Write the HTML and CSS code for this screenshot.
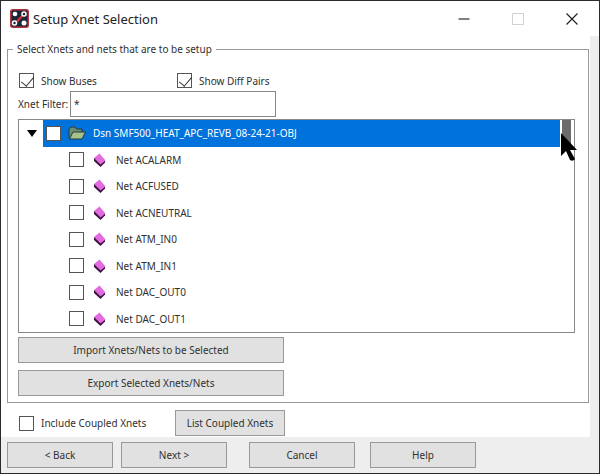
FILE: index.html
```html
<!DOCTYPE html>
<html lang="en">
<head>
<meta charset="utf-8">
<title>Setup Xnet Selection</title>
<link rel="stylesheet" href="styles.css">
</head>
<body>
<svg class="defs" aria-hidden="true">
  <symbol id="net" viewBox="0 0 14 16">
    <path d="M1 6v3l6.500 6L12 10.500V8z" fill="#3c1242"/>
    <path d="M1 6 6.500 1.500 12.500 8.500 7.500 12.500z" fill="#e26be0"/>
  </symbol>
</svg>
<div class="window">
  <header class="titlebar">
    <svg class="logo" viewBox="0 0 19 19" aria-hidden="true">
      <rect x=".75" y=".75" width="17.500" height="17.500" rx="2" fill="#1d2636" stroke="#b0343e" stroke-width="1.500"/>
      <path d="M4 15.500 15.500 3.500" stroke="#d8323c" stroke-width="2"/>
      <circle cx="5" cy="5" r="2.300" fill="#fff"/>
      <circle cx="14" cy="5" r="2" fill="#1d2636" stroke="#fff" stroke-width="1.500"/>
      <circle cx="4.500" cy="14" r="2" fill="#1d2636" stroke="#fff" stroke-width="1.500"/>
      <circle cx="14" cy="14" r="2.500" fill="#fff"/>
    </svg>
    <h1>Setup Xnet Selection</h1>
    <div class="controls">
      <button type="button" aria-label="Minimize"><svg viewBox="0 0 12 12"><path d="M.5 6h11" stroke="#555" stroke-width="1.500"/></svg></button>
      <button type="button" aria-label="Maximize" disabled><svg viewBox="0 0 12 12"><path d="M.5.5h11v11H.5z" fill="none" stroke="#d0d0d0"/></svg></button>
      <button type="button" aria-label="Close"><svg viewBox="0 0 12 12"><path d="m.5.5 11 11m0-11-11 11" stroke="#222" stroke-width="1.200"/></svg></button>
    </div>
  </header>
  <main class="page">
    <fieldset>
      <legend>Select Xnets and nets that are to be setup</legend>
      <div class="options">
        <label><input type="checkbox" checked>Show Buses</label>
        <label><input type="checkbox" checked>Show Diff Pairs</label>
      </div>
      <div class="filter">
        <label for="filter">Xnet Filter:</label>
        <input id="filter" type="text" value="*">
      </div>
      <div class="tree">
        <div class="row root">
          <button class="toggle" type="button" aria-label="Collapse"><svg viewBox="0 0 10 7"><path d="M0 0h10L5 7z"/></svg></button>
          <label><input type="checkbox"><svg class="folder" viewBox="0 0 18 14" aria-hidden="true"><path d="M1 12V3l2-2h4l1.500 2H14v3" fill="#6e8d70" stroke="#273a3c"/><path d="M1.500 13 5 6h12.500L14 13z" fill="#a5c28a" stroke="#273a3c"/></svg>Dsn SMF500_HEAT_APC_REVB_08-24-21-OBJ</label>
        </div>
        <label class="row"><input type="checkbox"><svg class="net"><use href="#net"/></svg>Net ACALARM</label>
        <label class="row"><input type="checkbox"><svg class="net"><use href="#net"/></svg>Net ACFUSED</label>
        <label class="row"><input type="checkbox"><svg class="net"><use href="#net"/></svg>Net ACNEUTRAL</label>
        <label class="row"><input type="checkbox"><svg class="net"><use href="#net"/></svg>Net ATM_IN0</label>
        <label class="row"><input type="checkbox"><svg class="net"><use href="#net"/></svg>Net ATM_IN1</label>
        <label class="row"><input type="checkbox"><svg class="net"><use href="#net"/></svg>Net DAC_OUT0</label>
        <label class="row"><input type="checkbox"><svg class="net"><use href="#net"/></svg>Net DAC_OUT1</label>
        <div class="thumb"></div>
        <svg class="pointer" viewBox="0 0 18 28" aria-hidden="true"><path d="M1 0v23l5-5 4 9q3 2 5-1l-5-9h7z"/></svg>
      </div>
      <div class="actions">
        <button class="btn" type="button">Import Xnets/Nets to be Selected</button>
        <button class="btn" type="button">Export Selected Xnets/Nets</button>
      </div>
    </fieldset>
    <div class="coupled">
      <label><input type="checkbox">Include Coupled Xnets</label>
      <button class="btn" type="button">List Coupled Xnets</button>
    </div>
  </main>
  <footer class="nav">
    <button class="btn" type="button">&lt; Back</button>
    <button class="btn" type="button">Next &gt;</button>
    <button class="btn apart" type="button">Cancel</button>
    <button class="btn" type="button">Help</button>
  </footer>
</div>
</body>
</html>
```
FILE: styles.css
```css
* {
  box-sizing: border-box;
}

body {
  margin: 0;
  background: #eee;
  color: #303030;
  font: 10px/14px "Noto Sans", "Open Sans", sans-serif;
}

button,
input {
  font: inherit;
  color: inherit;
}

svg {
  display: block;
  flex: none;
}

.defs {
  position: absolute;
  width: 0;
  height: 0;
}

.window {
  display: flex;
  flex-direction: column;
  min-height: 100vh;
  border: 1px solid #2c2a2e;
}

.titlebar {
  display: flex;
  align-items: center;
  height: 35px;
  padding-left: 9px;
  background: #fff;
}

.logo {
  width: 19px;
  height: 19px;
}

h1 {
  flex: 1;
  margin: 0 0 0 4px;
  font-size: 13px;
  font-weight: 400;
  line-height: 20px;
  color: #222;
}

.controls {
  display: flex;
}

.controls button {
  display: flex;
  align-items: center;
  justify-content: center;
  width: 54px;
  height: 34px;
  padding: 0;
  border: 0;
  background: none;
}

.controls svg {
  width: 12px;
  height: 12px;
}

.page {
  margin-right: 9px;
  padding: 6px 1px 1px 6px;
  background: #fff;
}

fieldset {
  min-width: 0;
  margin: 0;
  padding: 17px 13px 6px 10px;
  border: 1px solid #999;
}

legend {
  margin-left: -5px;
  padding: 0 4px;
}

label {
  display: flex;
  align-items: center;
}

input[type="checkbox"] {
  appearance: none;
  flex: none;
  width: 15px;
  height: 15px;
  margin: 0;
  border: 1px solid #555;
  background: #fff;
}

input[type="checkbox"]:checked::before {
  content: "";
  display: block;
  width: 6px;
  height: 11px;
  margin: 0 0 0 4px;
  border: solid #333;
  border-width: 0 1px 1px 0;
  transform: rotate(40deg);
}

.options {
  display: grid;
  grid-template-columns: 158px auto;
  justify-content: start;
  padding-left: 1px;
}

.options label,
.coupled label {
  gap: 7px;
}

.filter {
  display: flex;
  align-items: center;
  margin: 3px 0 2px;
}

.filter label {
  width: 52px;
  white-space: nowrap;
}

.filter input {
  width: 206px;
  height: 26px;
  padding: 0 3px;
  border: 1px solid #888;
  border-radius: 0;
  background: #fff;
}

.tree {
  position: relative;
  display: grid;
  grid-auto-rows: 1fr;
  min-height: 214px;
  border: 1px solid #888;
}

.row {
  gap: 9px;
  padding-left: 50px;
}

.net {
  width: 14px;
  height: 16px;
}

.root {
  display: flex;
  margin-right: 14px;
  padding-left: 0;
  gap: 0;
}

.root label {
  flex: 1;
  gap: 7px;
  padding-left: 3px;
  background: #0072dc;
  color: #fff;
}

.toggle {
  width: 24px;
  padding: 0 0 0 8px;
  border: 0;
  background: none;
}

.toggle svg {
  width: 10px;
  height: 7px;
}

.folder {
  width: 18px;
  height: 14px;
}

.thumb {
  position: absolute;
  top: 0;
  right: 3px;
  width: 9px;
  height: 26px;
  background: #6c6c6c;
}

.pointer {
  position: absolute;
  top: 13px;
  right: -4px;
  width: 18px;
  height: 28px;
}

.btn {
  height: 26px;
  padding: 0;
  border: 1px solid #999;
  border-radius: 0;
  background: #e1e1e1;
}

.actions {
  display: grid;
  grid-template-columns: 266px;
  gap: 7px;
  margin-top: 4px;
}

.coupled {
  display: grid;
  grid-template-columns: 156px 110px;
  align-items: center;
  padding: 7px 0 0 12px;
}

.nav {
  display: flex;
  gap: 8px;
  padding: 5px 6px;
}

.nav .btn {
  width: 106px;
}

.nav .apart {
  margin: 0 7px 0 14px;
}
```
